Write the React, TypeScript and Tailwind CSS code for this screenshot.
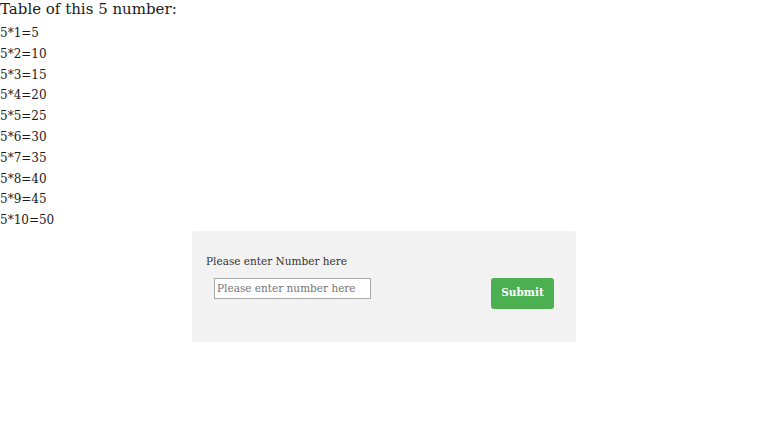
import { useState } from "react";

const App = () => {
  const [num, setNum] = useState(5);
  const [value, setValue] = useState("");
  const rows = Array.from({ length: 10 }, (_, i) => i + 1);

  return (
    <div className="min-h-[432px] bg-white text-[#1a1a1a] font-['DejaVu_Serif',serif]">
      <h3 className="text-[15px] leading-[18px]">Table of this {num} number:</h3>
      <div className="pt-[5px]">
        {rows.map((i) => (
          <p key={i} className="text-[12px] leading-[20.8px]">
            {num}*{i}={num * i}
          </p>
        ))}
      </div>
      <div className="mx-auto w-[384px] h-[111px] bg-[#f2f2f2] rounded-[3px] px-[14px] pt-[23px]">
        <label className="block text-[10.5px] text-[#333]">Please enter Number here</label>
        <div className="flex items-start justify-between pt-[8px] pl-[8px] pr-[8px]">
          <input
            type="text"
            inputMode="numeric"
            value={value}
            onChange={(e) => setValue(e.target.value)}
            placeholder="Please enter number here"
            className="w-[157px] h-[21px] border border-[#a9a9a9] bg-white px-[2px] text-[10.5px] placeholder:text-[#757575] outline-none"
          />
          <button
            onClick={() => value && setNum(Number(value))}
            className="w-[63px] h-[31px] bg-[#4caf50] text-white text-[10.5px] font-bold rounded-[3px]"
          >
            Submit
          </button>
        </div>
      </div>
    </div>
  );
};

export default App;
